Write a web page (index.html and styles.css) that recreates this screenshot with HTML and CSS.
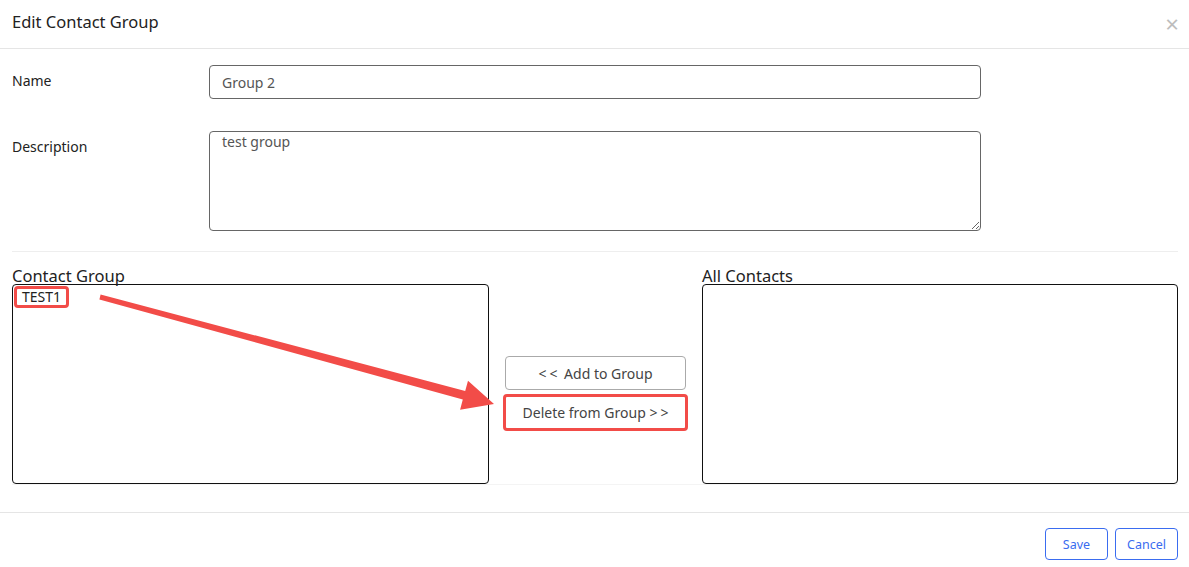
FILE: index.html
```html
<!DOCTYPE html>
<html>
<head>
<meta charset="utf-8">
<link rel="stylesheet" href="styles.css">
</head>
<body>
<div class="modal">
  <div class="header">
    <h4 class="title">Edit Contact Group</h4>
    <span class="close">×</span>
  </div>
  <div class="body">
    <div class="row">
      <label class="label">Name</label>
      <input class="input" type="text" value="Group 2">
    </div>
    <div class="row row-desc">
      <label class="label">Description</label>
      <textarea class="textarea">test group</textarea>
    </div>
    <div class="divider"></div>
    <div class="lists">
      <div class="list-col">
        <div class="list-title">Contact Group</div>
        <div class="listbox">
          <span class="item mark">TEST1</span>
        </div>
      </div>
      <div class="mid">
        <button class="btn"><span class="sp">&lt;&lt;</span> Add to Group</button>
        <button class="btn mark-btn">Delete from Group <span class="sp">&gt;&gt;</span></button>
      </div>
      <div class="list-col">
        <div class="list-title">All Contacts</div>
        <div class="listbox"></div>
      </div>
    </div>
    <div class="bottom-line"></div>
  </div>
  <div class="footer">
    <button class="fbtn">Save</button>
    <button class="fbtn">Cancel</button>
  </div>
  <svg class="arrow" width="1189" height="567" viewBox="0 0 1189 567">
    <polygon fill="#f24c48" points="100.6,294.6 465.2,390.9 468,380.7 494,404 460.1,409.7 462.8,399.5 99.4,299.4"/>
  </svg>
</div>
</body>
</html>
```
FILE: styles.css
```css
* { box-sizing: border-box; }
html, body { margin: 0; padding: 0; background: #fff; }
body {
  font-family: "Noto Sans", "Open Sans", sans-serif;
  color: #333;
  width: 1189px;
  height: 567px;
  overflow: hidden;
}
.modal { position: relative; width: 1189px; height: 567px; }
.header {
  height: 49px;
  border-bottom: 1px solid #e5e5e5;
  display: flex;
  align-items: center;
  justify-content: space-between;
  padding: 0 10px 6px 12px;
}
.title {
  margin: 0;
  font-size: 16.5px;
  font-weight: normal;
  color: #222;
}
.close {
  font-size: 24px;
  color: #bdbdbd;
  line-height: 1;
  margin-top: 6px;
}
.body { padding: 16px 11px 0 12px; }
.row { display: flex; align-items: flex-start; }
.label {
  width: 197px;
  font-size: 14px;
  color: #222;
  padding-top: 6px;
}
.input {
  width: 772px;
  height: 34px;
  border: 1px solid #666;
  border-radius: 4px;
  padding: 0 12px;
  font-family: inherit;
  font-size: 14px;
  color: #555;
  outline: none;
}
.row-desc { margin-top: 32px; }
.row-desc .label { padding-top: 6px; }
.textarea {
  width: 772px;
  height: 100px;
  border: 1px solid #666;
  border-radius: 4px;
  padding: 0 12px;
  font-family: inherit;
  font-size: 14px;
  color: #555;
  resize: vertical;
  outline: none;
  line-height: 20px;
  display: block;
}
.divider {
  margin-top: 20px;
  border-top: 1px solid #eee;
}
.lists {
  display: grid;
  grid-template-columns: 477px 181px 476px;
  column-gap: 16px;
  margin-top: 15px;
}
.list-title {
  font-size: 16.5px;
  color: #222;
  line-height: 17px;
}
.listbox {
  height: 200px;
  border: 1px solid #111;
  border-radius: 4px;
  padding: 0 1px;
}
.item {
  display: inline-block;
  font-size: 14px;
  color: #222;
  line-height: 16px;
  padding: 0 5px;
}
.mark {
  border: 3px solid #f24c48;
  border-radius: 4px;
}
.mid {
  display: flex;
  flex-direction: column;
  gap: 6px;
  padding-top: 89px;
}
.btn {
  height: 34px;
  width: 181px;
  background: #fff;
  border: 1px solid #aaa;
  border-radius: 4px;
  font-family: inherit;
  font-size: 14px;
  color: #444;
  padding: 0;
}
.sp { letter-spacing: 3px; }
.mark-btn .sp { margin-right: -3px; }
.mark-btn {
  border: 3px solid #f24c48;
  width: 185px;
  height: 37px;
  margin-left: -2px;
  margin-top: -2px;
}
.bottom-line {
  margin-top: 0;
  border-top: 1px solid #f4f4f4;
}
.footer {
  position: absolute;
  left: 0;
  right: 0;
  top: 512px;
  border-top: 1px solid #e5e5e5;
  display: flex;
  justify-content: flex-end;
  gap: 7px;
  padding: 15px 11px 0 0;
}
.fbtn {
  height: 32px;
  width: 63px;
  border: 1px solid #3a6cf0;
  border-radius: 4px;
  background: #fff;
  color: #3a6cf0;
  font-family: inherit;
  font-size: 12.5px;
}
.arrow { position: absolute; left: 0; top: 0; pointer-events: none; }
```
